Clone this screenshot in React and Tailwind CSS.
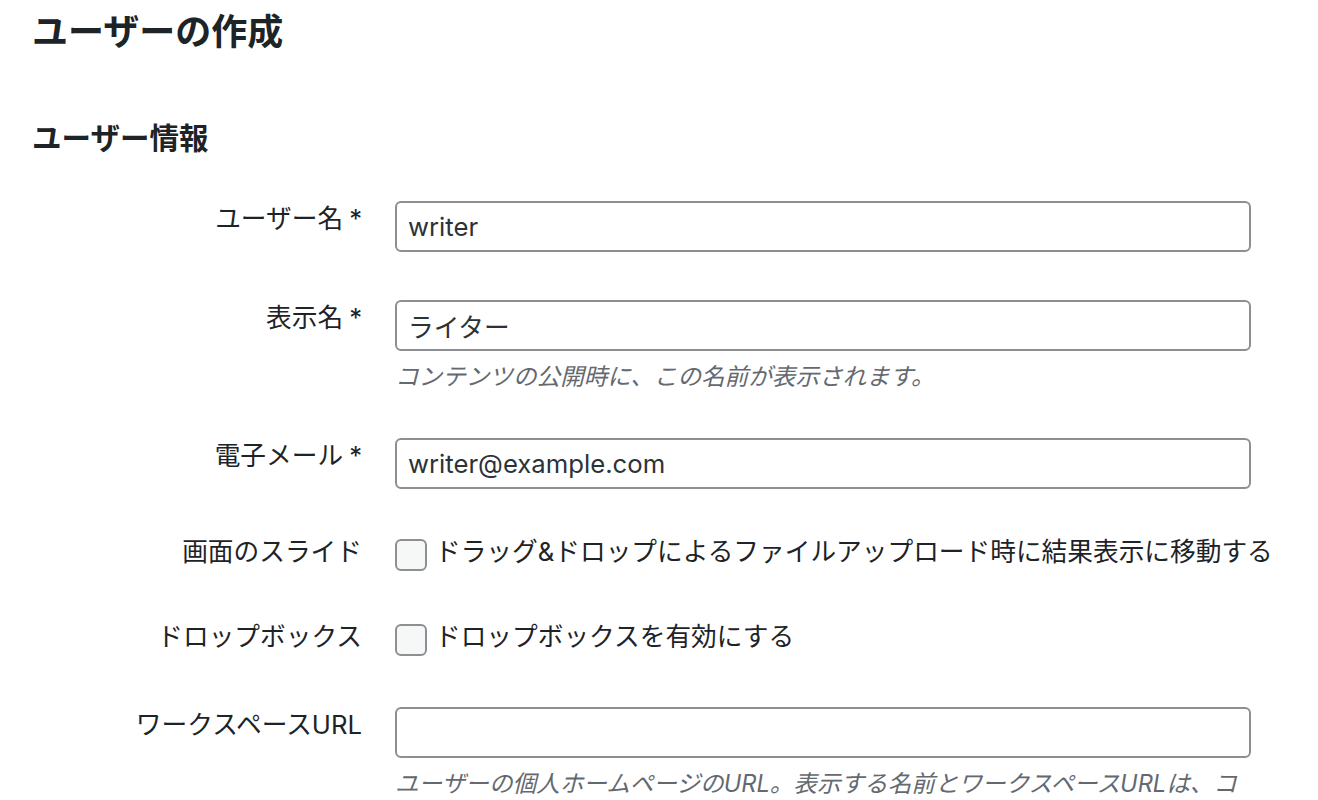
import React, { useState } from "react";

const FONT = {
  fontFamily:
    'Inter, "Noto Sans CJK JP", "Noto Sans", sans-serif',
};

const Row = ({ label, required, top, children }) => (
  <div className="flex" style={{ marginTop: top }}>
    <div className="w-[330px] shrink-0 whitespace-nowrap text-right text-[25.7px] leading-[36px] text-[#1d2327]">
      {label}
      {required && <span className="ml-[6px]">*</span>}
    </div>
    <div className="ml-[33px] w-[856px]">{children}</div>
  </div>
);

const TextInput = ({ value, onChange }) => (
  <input
    type="text"
    value={value}
    onChange={(e) => onChange(e.target.value)}
    className="block h-[51px] w-[856px] rounded-[6px] border-2 border-[#8c8f94] bg-white px-[11px] text-[25.7px] text-[#2c3338] outline-none"
    style={FONT}
  />
);

const Check = ({ checked, onChange, label }) => (
  <label className="flex items-start">
    <input
      type="checkbox"
      checked={checked}
      onChange={(e) => onChange(e.target.checked)}
      className="mt-[5px] h-[32px] w-[32px] shrink-0 appearance-none rounded-[6px] border-2 border-[#8c8f94] bg-[#f6f7f7]"
    />
    <span className="ml-[8px] whitespace-nowrap text-[25.7px] leading-[36px] text-[#1d2327]">
      {label}
    </span>
  </label>
);

const Hint = ({ children }) => (
  <p className="mt-[9px] text-[23.6px] italic leading-[34px] text-[#646970]">
    {children}
  </p>
);

export default function App() {
  const [form, setForm] = useState({
    userLogin: "writer",
    displayName: "ライター",
    email: "writer@example.com",
    slide: false,
    dropbox: false,
    url: "",
  });

  const set = (key) => (v) => setForm({ ...form, [key]: v });

  return (
    <div
      className="h-[800px] w-[1318px] overflow-hidden bg-white pl-[32px]"
      style={FONT}
    >
      <h1 className="pt-[9px] text-[36px] font-bold leading-[47px] text-[#1d2327]">
        ユーザーの作成
      </h1>
      <h2 className="mt-[63px] text-[29.5px] font-semibold leading-[38px] text-[#1d2327]">
        ユーザー情報
      </h2>

      <Row label="ユーザー名" required top={44}>
        <TextInput value={form.userLogin} onChange={set("userLogin")} />
      </Row>

      <Row label="表示名" required top={48}>
        <TextInput value={form.displayName} onChange={set("displayName")} />
        <Hint>コンテンツの公開時に、この名前が表示されます。</Hint>
      </Row>

      <Row label="電子メール" required top={44}>
        <TextInput value={form.email} onChange={set("email")} />
      </Row>

      <Row label="画面のスライド" top={45}>
        <Check
          checked={form.slide}
          onChange={set("slide")}
          label="ドラッグ&ドロップによるファイルアップロード時に結果表示に移動する"
        />
      </Row>

      <Row label="ドロップボックス" top={48}>
        <Check
          checked={form.dropbox}
          onChange={set("dropbox")}
          label="ドロップボックスを有効にする"
        />
      </Row>

      <Row label="ワークスペースURL" top={51}>
        <TextInput value={form.url} onChange={set("url")} />
        <Hint>
          ユーザーの個人ホームページのURL。表示する名前とワークスペースURLは、コンテンツの公開時に表示されます。
        </Hint>
      </Row>
    </div>
  );
}
